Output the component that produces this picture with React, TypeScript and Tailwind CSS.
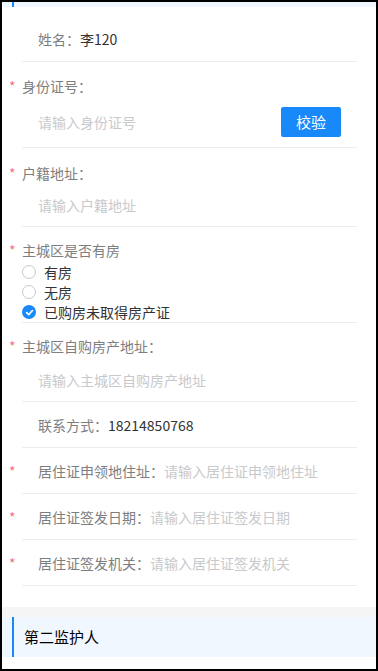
import React from "react";

const Star = () => (
  <span className="-ml-[14px] w-[14px] text-[#ee0a24] opacity-60 text-[14px] leading-[20px] pl-[1px]">*</span>
);

const Radio = ({ checked, label }: { checked?: boolean; label: string }) => (
  <div className="flex items-center h-[20px]">
    {checked ? (
      <span className="w-[14px] h-[14px] rounded-full bg-[#1989fa] flex items-center justify-center">
        <svg width="9" height="9" viewBox="0 0 10 10">
          <path d="M1.8 5.2 L4.1 7.4 L8.3 2.8" fill="none" stroke="#fff" strokeWidth="1.8" strokeLinecap="round" strokeLinejoin="round" />
        </svg>
      </span>
    ) : (
      <span className="w-[14px] h-[14px] rounded-full border border-[#c8c9cc] bg-white box-border" />
    )}
    <span className="ml-[8px] text-[14px] text-[#323233]">{label}</span>
  </div>
);

const InlineRow = ({ label, placeholder }: { label: string; placeholder: string }) => (
  <div className="h-[46px] border-b border-[#ebedf0] flex items-center">
    <Star />
    <span className="pl-[16px] text-[#7d7e80]">{label}：</span>
    <span className="text-[#c8c9cc]">{placeholder}</span>
  </div>
);

export default function App() {
  return (
    <div
      className="h-[671px] border-2 border-black bg-white flex flex-col overflow-hidden text-[14px] leading-[20px]"
      style={{ fontFamily: '"Microsoft YaHei", "Noto Sans CJK SC", "Noto Sans", sans-serif' }}
    >
      <div className="h-[5px] bg-[#f0f7ff] flex shrink-0">
        <div className="ml-[10px] w-[2px] bg-[#1989fa]" />
      </div>
      <div className="mt-[9px] ml-[20px] mr-[19px] flex flex-col">
        <div className="h-[46px] border-b border-[#ebedf0] flex items-center pl-[16px]">
          <span className="text-[#7d7e80]">姓名：</span>
          <span className="text-[#323233]">李120</span>
        </div>

        <div className="border-b border-[#ebedf0] flex flex-col pt-[14px] pb-[10px]">
          <div className="flex">
            <Star />
            <span className="text-[#7d7e80]">身份证号：</span>
          </div>
          <div className="mt-[11px] flex items-center pl-[16px] pr-[16px]">
            <span className="flex-1 text-[#c8c9cc]">请输入身份证号</span>
            <button className="w-[60px] h-[30px] rounded-[2px] bg-[#1989fa] text-white text-[15px]">校验</button>
          </div>
        </div>

        <div className="border-b border-[#ebedf0] flex flex-col pt-[15px] pb-[11px]">
          <div className="flex">
            <Star />
            <span className="text-[#7d7e80]">户籍地址：</span>
          </div>
          <div className="mt-[12px] pl-[16px] text-[#c8c9cc]">请输入户籍地址</div>
        </div>

        <div className="border-b border-[#ebedf0] flex flex-col pt-[13px]">
          <div className="flex">
            <Star />
            <span className="text-[#7d7e80]">主城区是否有房</span>
          </div>
          <div className="mt-[2px] flex flex-col">
            <Radio label="有房" />
            <Radio label="无房" />
            <Radio checked label="已购房未取得房产证" />
          </div>
        </div>

        <div className="border-b border-[#ebedf0] flex flex-col pt-[13px] pb-[11px]">
          <div className="flex">
            <Star />
            <span className="text-[#7d7e80]">主城区自购房产地址：</span>
          </div>
          <div className="mt-[14px] pl-[16px] text-[#c8c9cc]">请输入主城区自购房产地址</div>
        </div>

        <div className="h-[46px] border-b border-[#ebedf0] flex items-center pl-[16px]">
          <span className="text-[#7d7e80]">联系方式：</span>
          <span className="text-[#323233]">18214850768</span>
        </div>

        <InlineRow label="居住证申领地住址" placeholder="请输入居住证申领地住址" />
        <InlineRow label="居住证签发日期" placeholder="请输入居住证签发日期" />
        <InlineRow label="居住证签发机关" placeholder="请输入居住证签发机关" />
      </div>

      <div className="mt-[21px] h-[10px] bg-[#f5f5f5] shrink-0" />
      <div className="h-[40px] bg-[#f0f7ff] flex shrink-0">
        <div className="ml-[10px] w-[2px] bg-[#1989fa]" />
        <div className="ml-[10px] flex items-center text-[15px] text-black">第二监护人</div>
      </div>
      <div className="flex-1 bg-white" />
    </div>
  );
}
